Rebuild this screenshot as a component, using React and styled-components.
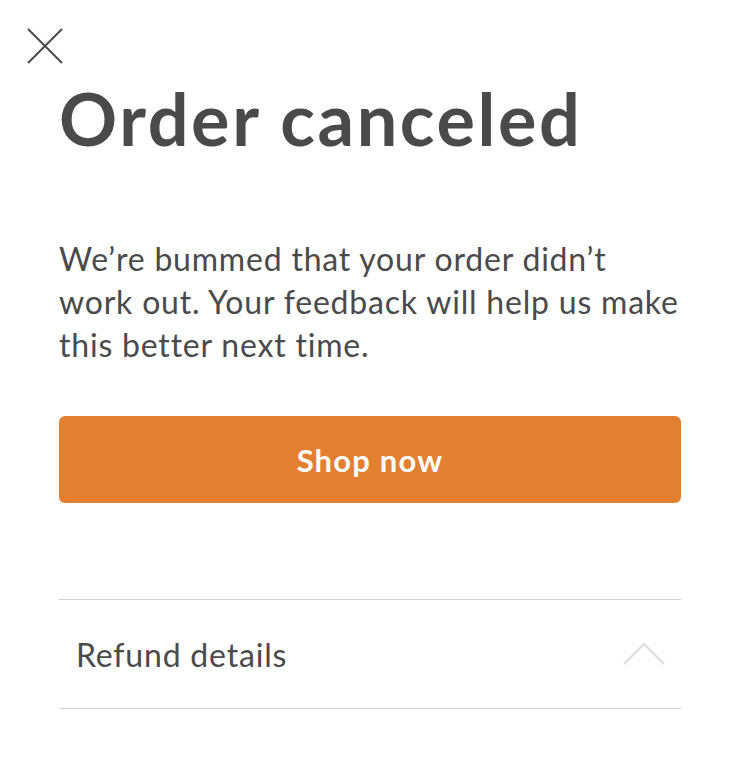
import React from "react";
import styled, { createGlobalStyle } from "styled-components";

const Global = createGlobalStyle`
  html, body { margin: 0; padding: 0; background: #ffffff; }
  body { font-family: Lato, "Open Sans", sans-serif; color: #4a4a4a; }
`;

const Page = styled.div`
  width: 738px;
  min-height: 762px;
  box-sizing: border-box;
  padding: 28px 57px 0 59px;
  display: flex;
  flex-direction: column;
`;

const CloseButton = styled.button`
  width: 36px;
  height: 36px;
  margin-left: -32px;
  padding: 0;
  border: none;
  background: none;
  display: flex;
  align-items: center;
  justify-content: center;
  cursor: pointer;
`;

const Title = styled.h1`
  margin: 14px 0 0 0;
  font-size: 72px;
  line-height: 80px;
  font-weight: 700;
  letter-spacing: 2.6px;
  color: #4a4a4a;
`;

const Body = styled.p`
  margin: 79px -14px 0 0;
  font-size: 32px;
  line-height: 43px;
  font-weight: 400;
  letter-spacing: 0.8px;
  color: #4a4a4a;
`;

const PrimaryButton = styled.button`
  margin-top: 50px;
  height: 87px;
  width: 100%;
  border: none;
  border-radius: 6px;
  background: #e27f30;
  color: #ffffff;
  font-family: Lato, sans-serif;
  font-size: 31px;
  font-weight: 700;
  letter-spacing: 1.2px;
  cursor: pointer;
`;

const Accordion = styled.div`
  margin-top: 96px;
  border-top: 1.5px solid #d2d2d2;
  border-bottom: 1.5px solid #d2d2d2;
`;

const AccordionHeader = styled.div`
  height: 108px;
  display: flex;
  align-items: center;
  justify-content: space-between;
  padding: 0 16px 0 17px;
`;

const AccordionLabel = styled.span`
  font-size: 32px;
  letter-spacing: 0.8px;
  color: #4a4a4a;
`;

export default function App() {
  return (
    <>
      <Global />
      <Page>
        <CloseButton aria-label="Close">
          <svg width="36" height="36" viewBox="0 0 36 36">
            <path d="M1 1 L35 35 M35 1 L1 35" stroke="#4a4a4a" strokeWidth="2" fill="none" />
          </svg>
        </CloseButton>
        <Title>Order canceled</Title>
        <Body>
          We’re bummed that your order didn’t
          <br />
          work out. Your feedback will help us make
          <br />
          this better next time.
        </Body>
        <PrimaryButton>Shop now</PrimaryButton>
        <Accordion>
          <AccordionHeader>
            <AccordionLabel>Refund details</AccordionLabel>
            <svg width="42" height="24" viewBox="0 0 42 24">
              <path d="M1 22 L21 2 L41 22" stroke="#dcdcdc" strokeWidth="2" fill="none" />
            </svg>
          </AccordionHeader>
        </Accordion>
      </Page>
    </>
  );
}
